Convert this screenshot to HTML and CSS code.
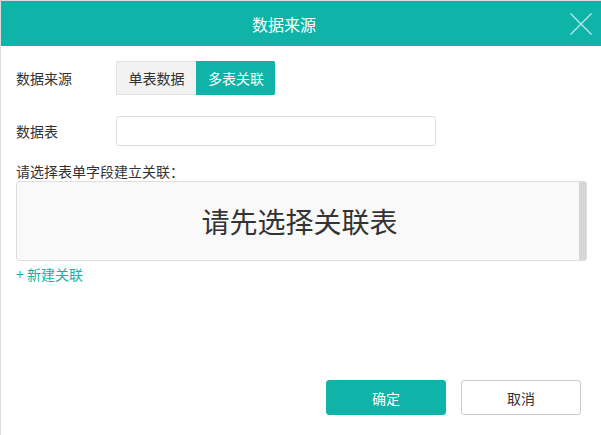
FILE: index.html
```html
<!DOCTYPE html>
<html lang="zh-CN">
<head>
    <meta charset="UTF-8">
    <meta name="viewport" content="width=device-width, initial-scale=1.0">
    <title>数据来源</title>
    <link rel="stylesheet" href="styles.css">
</head>
<body>

    <div class="dialog">
        <div class="dialog-header">
            <div class="dialog-title">数据来源</div>
            <span class="dialog-close">
                <svg width="22" height="22" viewBox="0 0 22 22">
                    <path d="M0.5 0.5 L21.5 21.5 M21.5 0.5 L0.5 21.5" stroke="#b9ebe5" stroke-width="1.3" fill="none"/>
                </svg>
            </span>
        </div>

        <div class="dialog-body">
            <div class="form-row row-source">
                <label class="form-label">数据来源</label>
                <div class="segmented">
                    <span class="seg-item">单表数据</span>
                    <span class="seg-item active">多表关联</span>
                </div>
            </div>

            <div class="form-row row-table">
                <label class="form-label">数据表</label>
                <input type="text" class="table-input">
            </div>

            <div class="hint">请选择表单字段建立关联：</div>
            <div class="relation-box">
                <div class="relation-empty">请先选择关联表</div>
                <div class="relation-scroll"></div>
            </div>
            <a class="add-link" href="#">+ 新建关联</a>
        </div>

        <div class="dialog-footer">
            <button class="btn btn-primary">确定</button>
            <button class="btn btn-default">取消</button>
        </div>
    </div>

</body>
</html>
```

FILE: styles.css
```css
body {
    margin: 0;
    background-color: #fff;
    font-family: "Noto Sans CJK SC", "Microsoft YaHei", sans-serif;
    color: #333;
}

.dialog {
    display: flex;
    flex-direction: column;
    height: 434px;
    border-top: 1px solid #dcdcdc;
    border-left: 1px solid #dcdcdc;
}

.dialog-header {
    display: flex;
    align-items: center;
    height: 45px;
    background-color: #0fb3a8;
    color: #fff;
}

.dialog-title {
    width: 566px;
    text-align: center;
    font-size: 16px;
}

.dialog-close {
    display: flex;
    margin-left: auto;
    margin-right: 9px;
}

.dialog-body {
    padding: 0 15px;
}

.form-row {
    display: flex;
    align-items: center;
}

.row-source {
    margin-top: 15px;
    height: 34px;
}

.row-table {
    margin-top: 21px;
    height: 30px;
}

.form-label {
    width: 100px;
    font-size: 14px;
}

.segmented {
    display: flex;
    height: 34px;
    border-radius: 2px;
    overflow: hidden;
}

.seg-item {
    display: flex;
    align-items: center;
    justify-content: center;
    width: 80px;
    font-size: 14px;
    background-color: #f2f2f2;
    border: 1px solid #e2e2e2;
    border-right: none;
    box-sizing: border-box;
}

.seg-item.active {
    width: 79px;
    background-color: #0fb3a8;
    border-color: #0fb3a8;
    color: #fff;
}

.table-input {
    width: 320px;
    height: 30px;
    box-sizing: border-box;
    border: 1px solid #dcdcdc;
    border-radius: 3px;
    outline: none;
}

.hint {
    margin-top: 15px;
    line-height: 20px;
    font-size: 14px;
}

.relation-box {
    display: flex;
    height: 80px;
    box-sizing: border-box;
    width: 571px;
    border: 1px solid #dedede;
    border-radius: 3px;
    background-color: #f9f9f9;
}

.relation-empty {
    flex: 1;
    display: flex;
    align-items: center;
    justify-content: center;
    font-size: 28px;
    padding-left: 3px;
}

.relation-scroll {
    width: 7px;
    background-color: #d6d6d6;
}

.add-link {
    display: inline-block;
    line-height: 20px;
    font-size: 14px;
    color: #0fb3a8;
    text-decoration: none;
}

.dialog-footer {
    display: flex;
    justify-content: flex-end;
    gap: 15px;
    margin-top: auto;
    padding: 0 20px 20px 0;
}

.btn {
    width: 120px;
    height: 35px;
    font-family: inherit;
    font-size: 14px;
    border-radius: 3px;
    cursor: pointer;
}

.btn-primary {
    background-color: #0fb3a8;
    border: 1px solid #0fb3a8;
    color: #fff;
}

.btn-default {
    background-color: #fff;
    border: 1px solid #ccc;
    color: #333;
}
```
